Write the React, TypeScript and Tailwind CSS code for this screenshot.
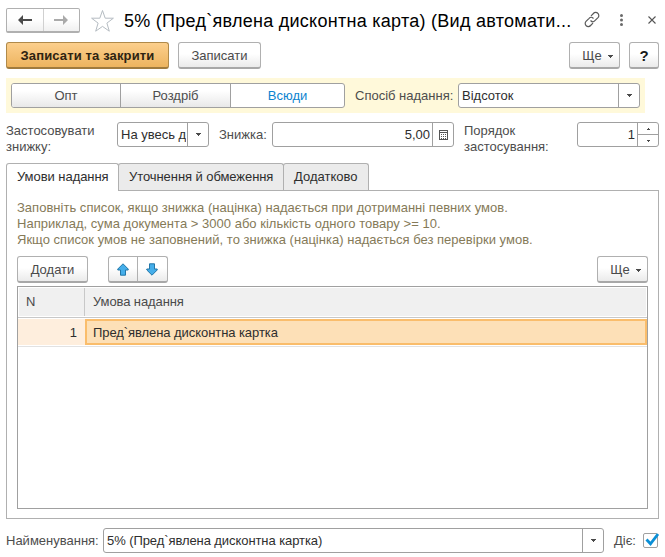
import type { ReactNode } from 'react';
import clsx from 'clsx';

const tabs = [
  { label: 'Умови надання', className: 'w-[113px] pl-[10px] tracking-[-0.05px]' },
  { label: 'Уточнення й обмеження', className: 'w-[166px] -ml-px pl-[10px] tracking-[-0.07px]' },
  { label: 'Додатково', className: 'w-[86px] -ml-px pl-[10px]' },
];

function Caret() {
  return (
    <svg width="5" height="3" viewBox="0 0 5 3" className="shrink-0" shapeRendering="crispEdges">
      <path d="M0 0h5v1H4v1H3v1H2V2H1V1H0z" fill="#4a4a4a" />
    </svg>
  );
}

function Button({ children, className, primary }: { children: ReactNode; className?: string; primary?: boolean }) {
  return (
    <button
      className={clsx(
        'flex h-[27px] shrink-0 items-center justify-center rounded-[3px] border border-b-2 bg-gradient-to-b pt-px',
        primary
          ? 'border-[#b08a4a] border-b-[#a07b3e] from-[#fccf8c] to-[#edb45f] font-bold tracking-[0.13px] text-[#2e2312]'
          : 'border-[#b0b0b0] border-b-[#a8a8a8] from-white from-45% to-[#ebebeb] text-[#4a4a4a]',
        className,
      )}
    >
      {children}
    </button>
  );
}

function Field({ children, className, addon }: { children: ReactNode; className?: string; addon: ReactNode }) {
  return (
    <div className={clsx('flex h-[25px] shrink-0 overflow-hidden rounded-[3px] border border-[#a0a0a0] bg-white text-[#2e2e2e]', className)}>
      <div className="flex min-w-0 flex-1 items-center overflow-hidden whitespace-nowrap">{children}</div>
      <div className="flex w-[21px] shrink-0 items-center justify-center border-l border-[#a0a0a0]">{addon}</div>
    </div>
  );
}

function TitleBar() {
  return (
    <header className="flex h-[25px] items-center">
      <div className="flex h-[25px] w-[74px] shrink-0 rounded-[2px] border border-b-2 border-[#b0b0b0] bg-gradient-to-b from-white from-45% to-[#f0f0f0]">
        <button className="flex flex-1 items-center justify-center border-r border-[#d0d0d0]">
          <svg width="14" height="10" viewBox="0 0 14 10" fill="#4a4a4a">
            <path d="M0 5 5 0v1.8L3.6 4H14v2H3.6L5 8.2V10z" />
            <path d="M3 3.2 5 1v8L3 6.8z" />
          </svg>
        </button>
        <button className="flex flex-1 items-center justify-center">
          <svg width="14" height="10" viewBox="0 0 14 10" fill="#aaa">
            <path d="M14 5 9 0v1.8L10.4 4H0v2h10.4L9 8.2V10z" />
            <path d="M11 3.2 9 1v8l2-2.2z" />
          </svg>
        </button>
      </div>
      <svg width="24" height="24" viewBox="0 0 24 24" className="ml-[10px] shrink-0" fill="none" stroke="#b5bcc2">
        <path d="m12.5 1.5 2.7 7.7h8.2l-6.5 4.9 2.4 8.1-6.8-4.8-6.8 4.8 2.4-8.1-6.5-4.9h8.2z" />
      </svg>
      <h1 className="ml-[10px] w-[460px] shrink-0 whitespace-nowrap text-[18px] leading-[24px] tracking-[0.27px] text-black">
        5% (Пред`явлена дисконтна карта) (Вид автомати...
      </h1>
      <svg width="17" height="17" viewBox="0 0 17 17" className="mt-[-2px] shrink-0" fill="none" stroke="#5a5a5a" strokeWidth="1.2" strokeLinecap="round">
        <path d="m7.3 4.6 2.1-2.1a3 3 0 0 1 4.4-.2 3 3 0 0 1 .2 4.3l-3.1 3.1a2.9 2.9 0 0 1-4.1.1" />
        <path d="m8.7 12.4-2.1 2.1a3 3 0 0 1-4.4.2 3 3 0 0 1-.2-4.3l3.1-3.1a2.9 2.9 0 0 1 4.1-.1" />
      </svg>
      <svg width="3" height="12" viewBox="0 0 3 12" className="-mt-[2px] ml-[19px] shrink-0" fill="#6a6a6a">
        <circle cx="1.5" cy="1.5" r="1.5" />
        <circle cx="1.5" cy="6" r="1.5" />
        <circle cx="1.5" cy="10.5" r="1.5" />
      </svg>
      <svg width="8" height="8" viewBox="0 0 8 8" className="-mt-[2px] ml-[25px] shrink-0" fill="none" stroke="#555" strokeWidth="1.1">
        <path d="m.5.5 7 7m0-7-7 7" />
      </svg>
    </header>
  );
}

function ConditionsTable() {
  return (
    <div className="mt-[3px] flex h-[223px] flex-col border border-[#a0a0a0]">
      <div className="flex h-[31px] border-b border-[#c8c8c8] p-px text-[#4a4a4a]">
        <div className="flex w-[65px] items-center bg-[#f0f0f0] pl-[7px]">N</div>
        <div className="flex flex-1 items-center border-l border-[#c8c8c8] bg-[#f0f0f0] pl-[8px] tracking-[-0.1px]">Умова надання</div>
      </div>
      <div className="flex h-[29px] border-b border-[#e2e2e2] py-px text-[#2e2e2e]">
        <div className="flex w-[67px] items-center justify-end bg-[#feeedd] pr-[8px] pt-px">1</div>
        <div className="flex flex-1 items-center border-2 border-[#fabd6b] bg-[#fde0b7] pl-[6px] pt-px tracking-[-0.07px]">
          Пред`явлена дисконтна картка
        </div>
      </div>
    </div>
  );
}

function Conditions() {
  return (
    <section>
      <div className="flex h-[27px] items-end">
        {tabs.map((tab, i) => (
          <button
            key={tab.label}
            className={clsx(
              'flex shrink-0 items-center whitespace-nowrap rounded-t-[3px] border border-b-0 border-[#b0b0b0] pb-px text-[#2e2e2e]',
              i === 0 ? 'relative z-10 h-[28px] -mb-px bg-white' : 'h-[27px] bg-[#ebebeb]',
              tab.className,
            )}
          >
            {tab.label}
          </button>
        ))}
      </div>
      <div className="h-[329px] border border-[#b0b0b0] px-[10px] pt-[9px]">
        <p className="whitespace-pre text-[13px] leading-[16px] tracking-[0.02px] text-[#857a58]">
          Заповніть список, якщо знижка (націнка) надається при дотриманні певних умов.
          <br />
          Наприклад, сума документа &gt; 3000 або кількість одного товару &gt;= 10.
          <br />
          Якщо список умов не заповнений, то знижка (націнка) надається без перевірки умов.
        </p>
        <div className="mt-[8px] flex">
          <Button className="w-[71px]">Додати</Button>
          <div className="ml-[20px] flex h-[27px] w-[60px] rounded-[3px] border border-b-2 border-[#b0b0b0] border-b-[#a8a8a8] bg-gradient-to-b from-white from-45% to-[#ebebeb]">
            <button className="flex w-[29px] items-center justify-center border-r border-[#b0b0b0]">
              <svg width="12" height="13" viewBox="0 0 12 13" fill="#45aeea" stroke="#2377a8">
                <path d="M6 .8 11.2 6v1H8.5v5.2h-5V7H.8V6z" />
              </svg>
            </button>
            <button className="flex w-[28px] items-center justify-center">
              <svg width="12" height="13" viewBox="0 0 12 13" fill="#45aeea" stroke="#2377a8">
                <path d="M6 12.2 11.2 7V6H8.5V.8h-5V6H.8v1z" />
              </svg>
            </button>
          </div>
          <Button className="ml-auto w-[51px] gap-[6px] pl-[6px]">
            Ще <span className="pt-[2px]"><Caret /></span>
          </Button>
        </div>
        <ConditionsTable />
      </div>
    </section>
  );
}

export default function App() {
  return (
    <div className="h-[557px] w-[665px] overflow-hidden bg-white pl-[6px] pr-[6px] pt-[8px] font-['Liberation_Sans',Arial,sans-serif] text-[13px] leading-[16px] text-[#4d4d4d]">
      <TitleBar />

      <div className="mt-[9px] flex w-[653px]">
        <Button primary className="w-[163px]">Записати та закрити</Button>
        <Button className="ml-[9px] w-[83px]">Записати</Button>
        <Button className="ml-auto w-[51px] gap-[6px] pl-[6px]">
          Ще <span className="pt-[2px]"><Caret /></span>
        </Button>
        <Button className="ml-[9px] w-[30px]">
          <span className="text-[15px] font-bold text-[#1a1a1a]">?</span>
        </Button>
      </div>

      <div className="mt-[9px] flex h-[35px] w-[639px] items-center bg-[#fff9da] px-[5px]">
        <div className="flex h-[25px] w-[334px] overflow-hidden rounded-[3px] border border-[#a0a0a0] bg-white">
          <button className="w-[109px] border-r border-[#a0a0a0] bg-gradient-to-b from-white from-30% to-[#e8e8e8]">Опт</button>
          <button className="w-[110px] border-r border-[#a0a0a0] bg-gradient-to-b from-white from-30% to-[#e8e8e8]">Роздріб</button>
          <button className="flex-1 text-[#0b84cf]">Всюди</button>
        </div>
        <span className="ml-[10px] w-[103px] whitespace-nowrap">Спосіб надання:</span>
        <Field className="w-[182px] pl-[3px]" addon={<Caret />}>Відсоток</Field>
      </div>

      <div className="mt-[9px] flex h-[41px] w-[653px]">
        <span className="w-[111px] pt-px">
          Застосовувати
          <br />
          знижку:
        </span>
        <Field className="w-[92px] pl-[3px]" addon={<Caret />}>
          <span className="w-[65px] overflow-hidden">На увесь д</span>
        </Field>
        <span className="ml-[10px] w-[53px] pt-[5px]">Знижка:</span>
        <Field
          className="w-[182px]"
          addon={
            <svg width="9" height="10" viewBox="0 0 9 10" shapeRendering="crispEdges">
              <path d="M0 0h9v10H0zM1 3v6h7V3zM1 1v1h7V1z" fill="#555" fillRule="evenodd" />
              <path d="M2 4h1v1H2zM4 4h1v1H4zM6 4h1v1H6zM2 6h1v1H2zM4 6h1v1H4zM6 6h1v1H6zM2 8h1v1H2zM4 8h1v1H4zM6 8h1v1H6z" fill="#555" />
            </svg>
          }
        >
          <span className="w-full pr-[2px] text-right">5,00</span>
        </Field>
        <span className="ml-[10px] w-[113px] pt-px">
          Порядок
          <br />
          застосування:
        </span>
        <Field
          className="w-[82px]"
          addon={
            <div className="flex h-full w-full flex-col">
              <span className="flex h-[12px] items-center justify-center border-b border-[#a0a0a0]">
                <svg width="3" height="2" viewBox="0 0 3 2" shapeRendering="crispEdges"><path d="M1 0h1v1h1v1H0V1h1z" fill="#4a4a4a" /></svg>
              </span>
              <span className="flex flex-1 items-center justify-center">
                <svg width="3" height="2" viewBox="0 0 3 2" shapeRendering="crispEdges"><path d="M0 0h3v1H2v1H1V1H0z" fill="#4a4a4a" /></svg>
              </span>
            </div>
          }
        >
          <span className="w-full pr-[2px] text-right">1</span>
        </Field>
      </div>

      <Conditions />

      <div className="mt-[9px] flex w-[653px] items-center">
        <span className="w-[97px]">Найменування:</span>
        <Field className="w-[501px] pl-[3px]" addon={<Caret />}>
          <span className="tracking-[-0.08px]">5% (Пред`явлена дисконтна картка)</span>
        </Field>
        <span className="ml-[10px] w-[29px]">Діє:</span>
        <div className="flex h-[15px] w-[15px] shrink-0 items-center justify-center rounded-[2px] border border-[#a0a0a0]">
          <svg width="14" height="13" viewBox="0 0 14 13" className="relative left-[1px] -top-[1px] shrink-0" fill="none" stroke="#0b8fd6" strokeWidth="2.8">
            <path d="m1.5 6.5 4 4.3L13 1" />
          </svg>
        </div>
      </div>
    </div>
  );
}
